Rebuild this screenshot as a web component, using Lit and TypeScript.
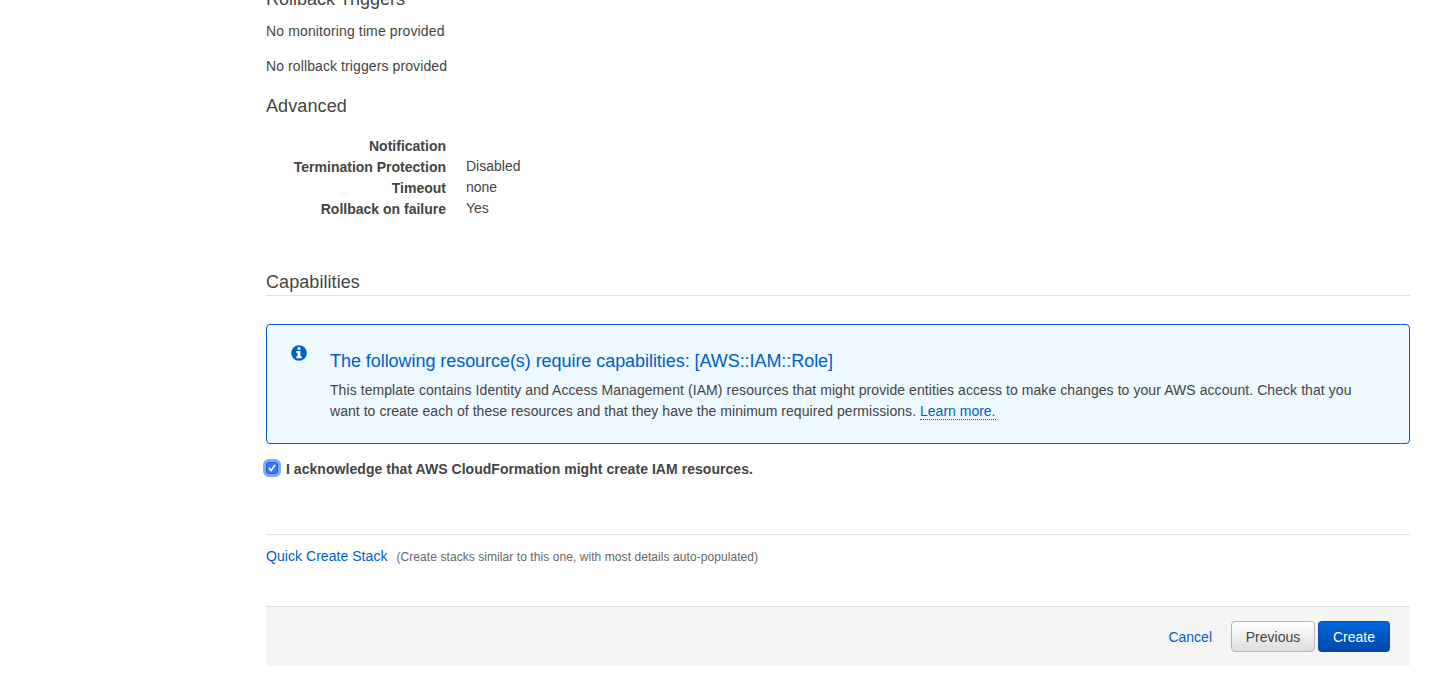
import { LitElement, html, css } from "lit";
import { customElement, state } from "lit/decorators.js";

const SETTINGS = [
  { label: "Notification", value: "" },
  { label: "Termination Protection", value: "Disabled" },
  { label: "Timeout", value: "none" },
  { label: "Rollback on failure", value: "Yes" },
];

@customElement("app-root")
export class AppRoot extends LitElement {
  @state() private acknowledged = true;

  static styles = css`
    :host {
      display: block;
      box-sizing: border-box;
      height: 694px;
      overflow: hidden;
      background: #fff;
      color: #444;
      font: 14px/21px "Liberation Sans", Arial, sans-serif;
      padding: 0 30px 0 266px;
      white-space: nowrap;
    }
    h2, h3, p, dl, dt, dd { margin: 0; font-weight: 400; }
    h2 { font-size: 18px; line-height: 24px; }
    a { color: #005fc5; text-decoration: none; }
    .triggers { margin-top: -13px; }
    .monitoring { margin-top: 10px; letter-spacing: 0.13px; }
    .rollback { margin-top: 14px; letter-spacing: 0.1px; }
    .advanced { margin-top: 17px; letter-spacing: 0.1px; }
    dl { margin-top: 18px; }
    .row { display: grid; grid-template-columns: 180px 1fr; column-gap: 20px; height: 21px; }
    dt { text-align: right; font-weight: 700; }
    dd { margin-top: -1px; }
    .capabilities { margin-top: 50px; height: 25px; border-bottom: 1px solid #e2e2e2; letter-spacing: 0.07px; }
    .notice {
      box-sizing: border-box;
      height: 120px;
      margin-top: 28px;
      border: 1px solid #005fc5;
      border-radius: 4px;
      background: #edf8ff;
      display: flex;
      padding: 20px 24px;
    }
    .info { width: 16px; height: 16px; margin-right: 23px; flex: none; }
    .notice h3 {
      color: #005fc5;
      font-size: 18px;
      line-height: 24px;
      margin-top: 4px;
      margin-bottom: 7px;
      letter-spacing: -0.055px;
    }
    .d1 { letter-spacing: 0.072px; }
    .d2 { letter-spacing: 0.044px; }
    .learn { border-bottom: 1px dotted #005fc5; letter-spacing: 0; }
    .ack { display: flex; align-items: center; margin-top: 15px; font-weight: 700; letter-spacing: 0.047px; }
    .box {
      appearance: none;
      box-sizing: border-box;
      width: 12px;
      height: 12px;
      margin: 0;
      border: 1px solid #1a5fe0;
      border-radius: 3px;
      background: #3478f6;
      box-shadow: 0 0 0 3px #80aaf9;
    }
    .check { display: grid; width: 12px; height: 12px; margin: -3px 8px 0 0; }
    .check > * { grid-area: 1 / 1; }
    .check svg { z-index: 1; pointer-events: none; }
    .quick { margin-top: 54px; border-top: 1px solid #e2e2e2; padding-top: 11px; display: flex; }
    .qlink { letter-spacing: 0.05px; }
    .hint { font-size: 12px; color: #666; margin: 1px 0 -1px 9px; letter-spacing: 0.07px; }
    footer {
      box-sizing: border-box;
      height: 60px;
      margin-top: 39px;
      border-top: 1px solid #e2e2e2;
      background: #f5f5f5;
      display: flex;
      justify-content: flex-end;
      align-items: flex-start;
      padding: 14px 20px 0;
    }
    .cancel { margin: 6px 19px 0 0; }
    button {
      box-sizing: border-box;
      height: 31px;
      padding: 1px 0 0;
      border: 1px solid #b8b8b8;
      border-radius: 4px;
      font: inherit;
      color: #444;
      background: linear-gradient(#fff, #ddd);
    }
    .previous { width: 84px; margin-right: 3px; }
    .create {
      width: 72px;
      color: #fff;
      border-color: #0058bc #0050ae #00479d;
      background: linear-gradient(#0067d8, #0048ac);
    }
  `;

  render() {
    return html`
      <h2 class="triggers">Rollback Triggers</h2>
      <p class="monitoring">No monitoring time provided</p>
      <p class="rollback">No rollback triggers provided</p>
      <h2 class="advanced">Advanced</h2>
      <dl>
        ${SETTINGS.map((s) => html`<div class="row"><dt>${s.label}</dt><dd>${s.value}</dd></div>`)}
      </dl>
      <h2 class="capabilities">Capabilities</h2>
      <section class="notice">
        <svg class="info" viewBox="0 0 16 16">
          <circle cx="8" cy="8" r="7.8" fill="#005fc5" />
          <path fill="#fff" d="M6.6 2.2h2.8v2.5H6.6zM5.4 6h4v5.2h1.3v2H5.4v-2h1.2V8H5.4z" />
        </svg>
        <div>
          <h3>The following resource(s) require capabilities: [AWS::IAM::Role]</h3>
          <p class="d1">This template contains Identity and Access Management (IAM) resources that might provide entities access to make changes to your AWS account. Check that you</p>
          <p class="d2">want to create each of these resources and that they have the minimum required permissions. <a class="learn">Learn more.</a></p>
        </div>
      </section>
      <label class="ack">
        <span class="check">
          <input class="box" type="checkbox" .checked=${this.acknowledged}
            @change=${(e: Event) => (this.acknowledged = (e.target as HTMLInputElement).checked)} />
          ${this.acknowledged
            ? html`<svg viewBox="0 0 12 12" fill="none" stroke="#fff" stroke-width="1.7" stroke-linecap="round" stroke-linejoin="round"><path d="M3.4 6.5 5.2 8.6 8.7 3.4" /></svg>`
            : ""}
        </span>
        <span>I acknowledge that AWS CloudFormation might create IAM resources.</span>
      </label>
      <div class="quick">
        <a class="qlink">Quick Create Stack</a>
        <span class="hint">(Create stacks similar to this one, with most details auto-populated)</span>
      </div>
      <footer>
        <a class="cancel">Cancel</a>
        <button class="previous">Previous</button>
        <button class="create">Create</button>
      </footer>
    `;
  }
}
